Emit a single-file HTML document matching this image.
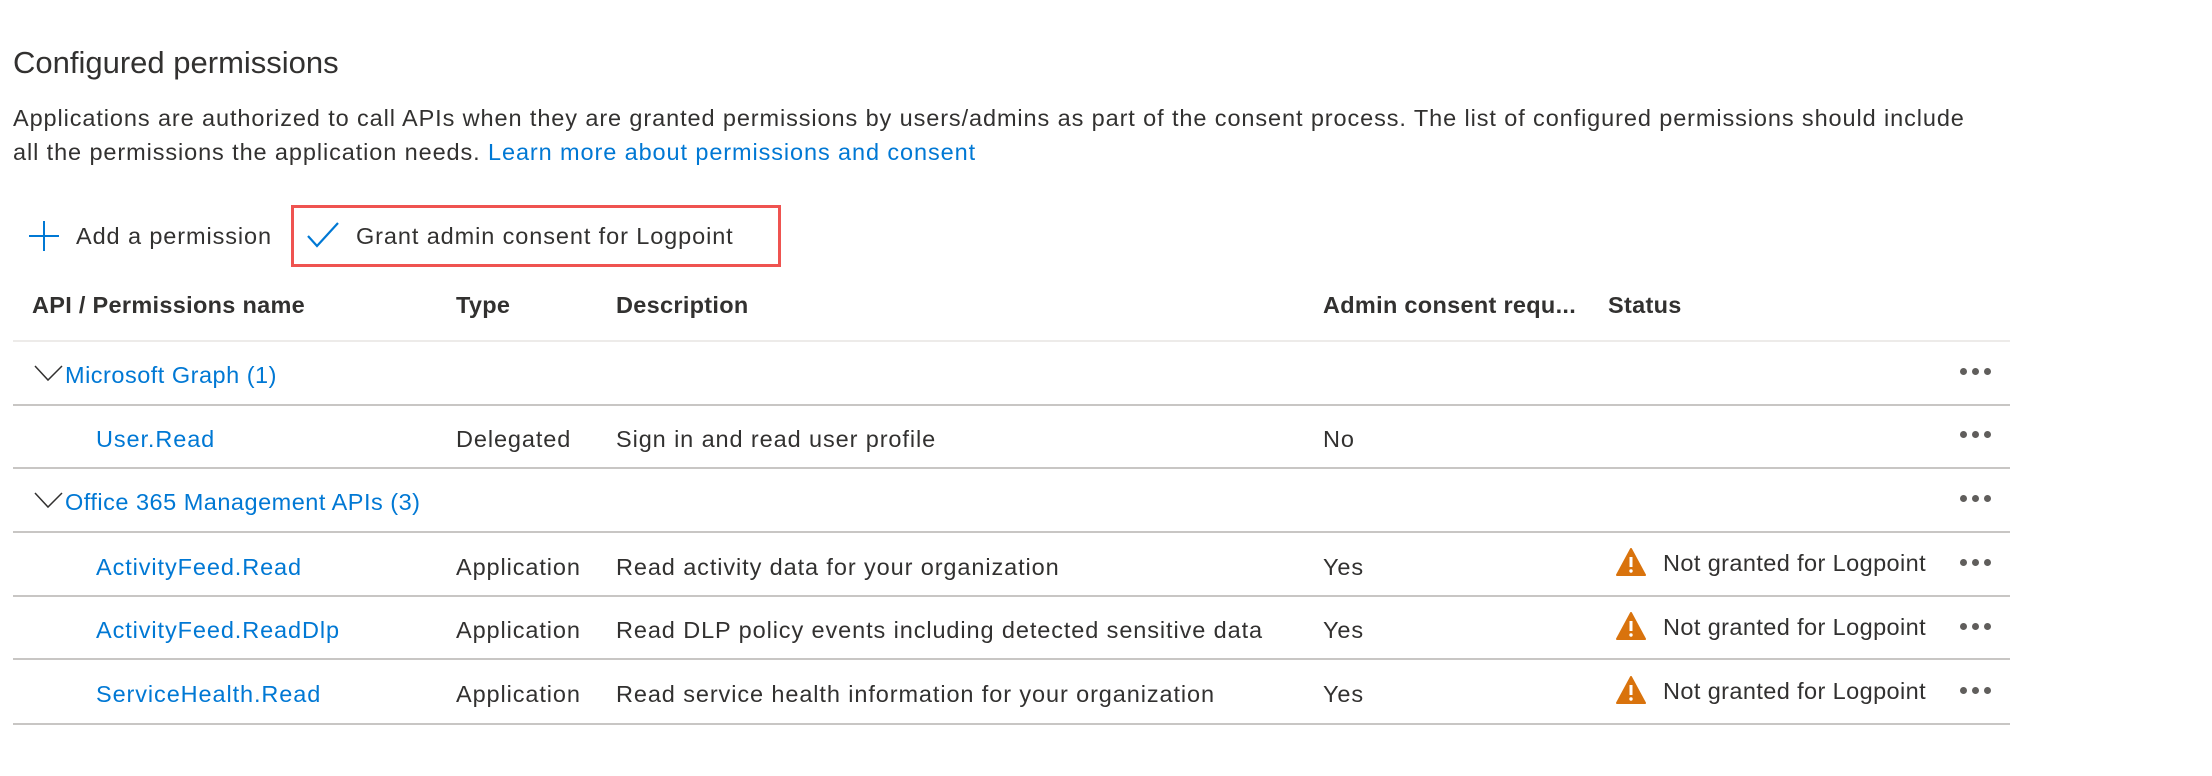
<!DOCTYPE html>
<html><head><meta charset="utf-8"><style>
body{margin:0;width:2212px;height:776px;background:#fff;font-family:"Liberation Sans",sans-serif;color:#323130;position:relative;overflow:hidden}
.a{position:absolute;white-space:nowrap}
.t{font-size:23.5px;line-height:30px;letter-spacing:0.9px}
.b{color:#0078d4}
.h{font-weight:bold;font-size:23.5px;letter-spacing:0.3px}
.line{position:absolute;left:13px;width:1997px;height:2px;background:#c8c6c4}
.dots{position:absolute;left:1960px;width:60px;height:8px;white-space:nowrap}
.dots i{display:inline-block;width:7px;height:7px;border-radius:50%;background:#605e5c;margin-right:5px}
</style></head><body>
<div class="a" style="left:13px;top:45px;font-size:31px">Configured permissions</div>
<div class="a t" style="left:13px;top:103px">Applications are authorized to call APIs when they are granted permissions by users/admins as part of the consent process. The list of configured permissions should include</div>
<div class="a t" style="left:13px;top:137px">all the permissions the application needs. <span class="b">Learn more about permissions and consent</span></div>

<svg class="a" style="left:28px;top:220px" width="32" height="32"><path d="M16 1V31M1 16H31" stroke="#0078d4" stroke-width="2"/></svg>
<div class="a t" style="left:76px;top:221px">Add a permission</div>
<div class="a" style="left:291px;top:205px;width:484px;height:56px;border:3px solid #ef5350"></div>
<svg class="a" style="left:306px;top:220px" width="34" height="30"><path d="M2 16L11 26L32 3" stroke="#0078d4" stroke-width="2.2" fill="none"/></svg>
<div class="a t" style="left:356px;top:221px">Grant admin consent for Logpoint</div>

<div class="a h" style="left:32px;top:292px">API / Permissions name</div>
<div class="a h" style="left:456px;top:292px">Type</div>
<div class="a h" style="left:616px;top:292px">Description</div>
<div class="a h" style="left:1323px;top:292px">Admin consent requ...</div>
<div class="a h" style="left:1608px;top:292px">Status</div>
<div class="line" style="top:340px;background:#edebe9"></div>

<svg class="a" style="left:34px;top:364px" width="30" height="18"><path d="M1 2L14 16L28 2" stroke="#323130" stroke-width="1.5" fill="none"/></svg>
<div class="a t b" style="left:65px;top:360px;letter-spacing:0.5px">Microsoft Graph (1)</div>
<div class="dots" style="top:362px"><i></i><i></i><i></i></div>
<div class="line" style="top:404px"></div>

<div class="a t b" style="left:96px;top:424px">User.Read</div>
<div class="a t" style="left:456px;top:424px">Delegated</div>
<div class="a t" style="left:616px;top:424px">Sign in and read user profile</div>
<div class="a t" style="left:1323px;top:424px">No</div>
<div class="dots" style="top:425px"><i></i><i></i><i></i></div>
<div class="line" style="top:467px"></div>

<svg class="a" style="left:34px;top:491px" width="30" height="18"><path d="M1 2L14 16L28 2" stroke="#323130" stroke-width="1.5" fill="none"/></svg>
<div class="a t b" style="left:65px;top:487px;letter-spacing:0.5px">Office 365 Management APIs (3)</div>
<div class="dots" style="top:489px"><i></i><i></i><i></i></div>
<div class="line" style="top:531px"></div>

<div class="a t b" style="left:96px;top:552px">ActivityFeed.Read</div>
<div class="a t" style="left:456px;top:552px">Application</div>
<div class="a t" style="left:616px;top:552px">Read activity data for your organization</div>
<div class="a t" style="left:1323px;top:552px">Yes</div>
<svg class="a" style="left:1616px;top:548px" width="30" height="28"><path d="M15 1L29 27H1Z" fill="#d9730d" stroke="#d9730d" stroke-linejoin="round" stroke-width="2"/><path d="M15 9V19" stroke="#fff" stroke-width="3"/><circle cx="15" cy="23" r="1.7" fill="#fff"/></svg>
<div class="a t" style="left:1663px;top:548px;letter-spacing:0.4px">Not granted for Logpoint</div>
<div class="dots" style="top:553px"><i></i><i></i><i></i></div>
<div class="line" style="top:595px"></div>

<div class="a t b" style="left:96px;top:615px">ActivityFeed.ReadDlp</div>
<div class="a t" style="left:456px;top:615px">Application</div>
<div class="a t" style="left:616px;top:615px">Read DLP policy events including detected sensitive data</div>
<div class="a t" style="left:1323px;top:615px">Yes</div>
<svg class="a" style="left:1616px;top:612px" width="30" height="28"><path d="M15 1L29 27H1Z" fill="#d9730d" stroke="#d9730d" stroke-linejoin="round" stroke-width="2"/><path d="M15 9V19" stroke="#fff" stroke-width="3"/><circle cx="15" cy="23" r="1.7" fill="#fff"/></svg>
<div class="a t" style="left:1663px;top:612px;letter-spacing:0.4px">Not granted for Logpoint</div>
<div class="dots" style="top:617px"><i></i><i></i><i></i></div>
<div class="line" style="top:658px"></div>

<div class="a t b" style="left:96px;top:679px">ServiceHealth.Read</div>
<div class="a t" style="left:456px;top:679px">Application</div>
<div class="a t" style="left:616px;top:679px">Read service health information for your organization</div>
<div class="a t" style="left:1323px;top:679px">Yes</div>
<svg class="a" style="left:1616px;top:676px" width="30" height="28"><path d="M15 1L29 27H1Z" fill="#d9730d" stroke="#d9730d" stroke-linejoin="round" stroke-width="2"/><path d="M15 9V19" stroke="#fff" stroke-width="3"/><circle cx="15" cy="23" r="1.7" fill="#fff"/></svg>
<div class="a t" style="left:1663px;top:676px;letter-spacing:0.4px">Not granted for Logpoint</div>
<div class="dots" style="top:681px"><i></i><i></i><i></i></div>
<div class="line" style="top:723px"></div>
</body></html>
